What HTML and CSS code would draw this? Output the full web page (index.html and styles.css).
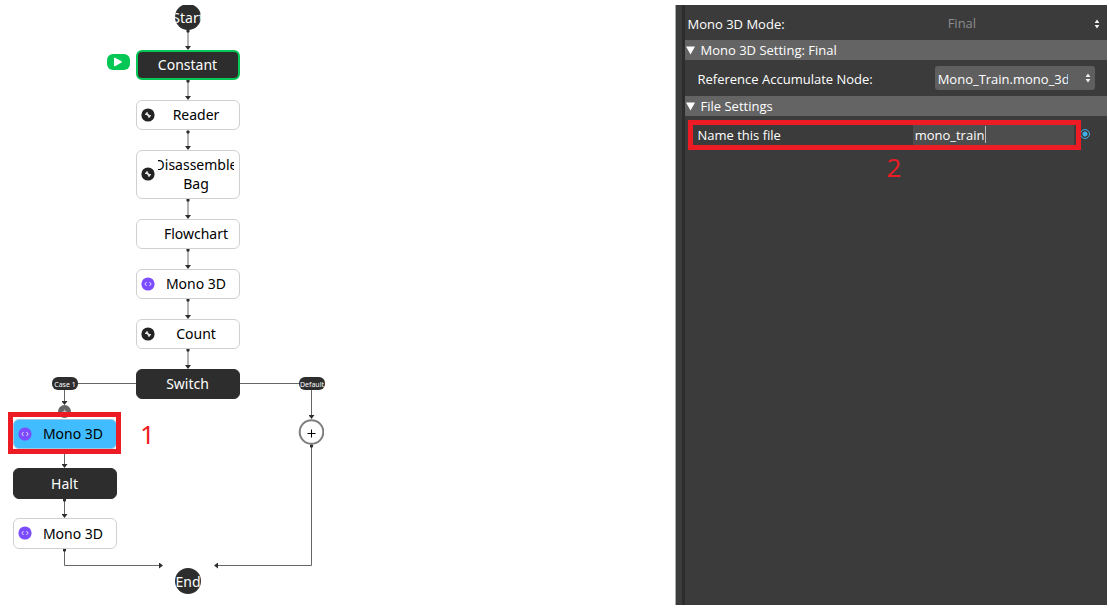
FILE: index.html
```html
<!DOCTYPE html>
<html lang="en">
<head>
<meta charset="utf-8">
<title>Mono 3D flowchart</title>
<link rel="stylesheet" href="styles.css">
</head>
<body>
<svg class="defs" aria-hidden="true">
  <symbol id="tool" viewBox="0 0 14 14"><circle cx="7" cy="7" r="6.6" fill="#232323"/><path d="M5 5l4 4" stroke="#eee" stroke-width="1.8" fill="none"/><path d="M4 6.500h2.300V4.200M7.700 9.800V7.500H10" stroke="#ddd" stroke-width="1.1" fill="none"/></symbol>
  <symbol id="code" viewBox="0 0 14 14"><circle cx="7" cy="7" r="6.6" fill="#7b4dff"/><path d="M5.6 5L3.8 7l1.8 2M8.4 5l1.800 2-1.800 2" stroke="#e4dbff" fill="none"/></symbol>
  <symbol id="updown" viewBox="0 0 6 10"><path d="M3 0.5L5.4 4H.6zM3 9.5L5.4 6H.6z" fill="#f2f2f2"/></symbol>
</svg>
<main class="canvas">
  <svg class="edges" aria-hidden="true">
    <defs>
      <marker id="tip" viewBox="0 0 6 4" refX="3" refY="3" markerWidth="6" markerHeight="4" markerUnits="userSpaceOnUse"><path d="M0 0h6L3 4z" fill="#2d2d2d"/></marker>
      <marker id="side" viewBox="0 0 4 6" refX="3" refY="3" markerWidth="4" markerHeight="6" markerUnits="userSpaceOnUse" orient="auto"><path d="M0 0v6L4 3z" fill="#2d2d2d"/></marker>
      <marker id="dot" viewBox="0 0 4 4" refX="2" refY="2" markerWidth="4" markerHeight="4" markerUnits="userSpaceOnUse"><circle cx="2" cy="2" r="1.7" fill="#2d2d2d"/></marker>
    </defs>
    <g class="both">
      <path d="M188 31V49"/><path d="M188 81V99"/><path d="M188 132V149"/><path d="M188 200V218"/><path d="M188 250V268"/><path d="M188 300V318"/><path d="M188 350V368"/><path d="M64.500 500V517"/>
    </g>
    <g class="end"><path d="M64.500 390V404"/><path d="M64.500 449V467"/><path d="M311.500 390V418"/></g>
    <g class="turn"><path d="M64.500 550V565.500H162"/><path d="M311.500 446V565.500H215"/></g>
    <path d="M77 383.500H136M240 383.500H299"/>
  </svg>
  <div class="terminal start"><span>Start</span></div>
  <button class="play" aria-label="Run"><svg viewBox="0 0 22 16"><path d="M7 4.500Q7 3.400 8 3.800L14.500 7.300Q15.300 8 14.500 8.600L8 12.200Q7 12.500 7 11.500z" fill="#fff"/></svg></button>
  <div class="node dark active main n1"><span class="label">Constant</span></div>
  <div class="node main n2"><svg class="icon"><use href="#tool"/></svg><span class="label">Reader</span></div>
  <div class="node tall main n3"><svg class="icon"><use href="#tool"/></svg><span class="label"><span>Disassemble</span><span>Bag</span></span></div>
  <div class="node main n4"><span class="icon"></span><span class="label">Flowchart</span></div>
  <div class="node main n5"><svg class="icon"><use href="#code"/></svg><span class="label">Mono 3D</span></div>
  <div class="node main n6"><svg class="icon"><use href="#tool"/></svg><span class="label">Count</span></div>
  <div class="node dark main n7"><span class="label">Switch</span></div>
  <div class="pill case">Case 1</div>
  <div class="pill default">Default</div>
  <div class="insert">+</div>
  <div class="node selected left m1"><svg class="icon"><use href="#code"/></svg><span class="label">Mono 3D</span></div>
  <div class="node dark left m2"><span class="label">Halt</span></div>
  <div class="node left m3"><svg class="icon"><use href="#code"/></svg><span class="label">Mono 3D</span></div>
  <button class="add" aria-label="Add node"><svg viewBox="0 0 26 26"><circle cx="13.500" cy="13" r="11.800" fill="#fff" stroke="#7d7d7d" stroke-width="2"/><path d="M9.500 14.500h8M13.500 10.500v8" stroke="#000" fill="none"/></svg></button>
  <div class="terminal finish"><span>End</span></div>
  <div class="mark mark-one"></div>
  <div class="number one">1</div>
</main>
<aside class="panel">
  <div class="row mode">
    <label for="mode">Mono 3D Mode:</label>
    <div class="pick plain"><select id="mode"><option>Final</option></select><svg><use href="#updown"/></svg></div>
  </div>
  <h2><svg viewBox="0 0 10 9"><path d="M0 0h10L5 9z" fill="#fff"/></svg>Mono 3D Setting: Final</h2>
  <div class="row">
    <label for="ref">Reference Accumulate Node:</label>
    <div class="pick boxed"><select id="ref"><option>Mono_Train.mono_3d</option></select><svg><use href="#updown"/></svg></div>
  </div>
  <h2><svg viewBox="0 0 10 9"><path d="M0 0h10L5 9z" fill="#fff"/></svg>File Settings</h2>
  <div class="row file">
    <label for="name">Name this file</label>
    <div class="entry"><div class="field"><input id="name" type="text" value="mono_train"><i class="caret"></i></div><input class="dot" type="radio" checked aria-label="Link file name"></div>
    <div class="mark mark-two"></div>
    <div class="number two">2</div>
  </div>
</aside>
</body>
</html>
```
FILE: styles.css
```css
* { box-sizing: border-box; }
body {
  margin: 0;
  min-height: 100vh;
  display: flex;
  background: #fff;
  font-family: "Noto Sans", "Open Sans", sans-serif;
}
button { padding: 0; border: 0; background: none; }
.defs { position: absolute; width: 0; height: 0; }

/* Flowchart */
.canvas { position: relative; flex: 1; min-width: 330px; min-height: 600px; font-size: 14px; }
.edges { position: absolute; inset: 0; width: 100%; height: 100%; fill: none; stroke: #666; }
.edges marker { stroke: none; }
.both path { marker-start: url(#dot); marker-end: url(#tip); }
.end path { marker-end: url(#tip); }
.turn path { marker-start: url(#dot); marker-end: url(#side); }
.node {
  position: absolute;
  width: 104px;
  height: 30px;
  display: flex;
  align-items: center;
  padding: 0 5px 1px 4px;
  border: 1px solid #d0d0d0;
  border-radius: 6px;
  background: #fff;
  color: #000;
  line-height: 19px;
}
.icon { flex: none; width: 14px; height: 14px; }
.label { flex: 1; min-width: 0; display: flex; flex-direction: column; align-items: center; margin-left: 3px; overflow: hidden; white-space: nowrap; }
.dark .label { margin-left: 0; }
.tall { height: 49px; }
.dark { background: #2d2d2d; border-color: #2d2d2d; color: #fff; }
.active { border: 2px solid #05c755; }
.selected { background: #40bcff; border-color: #9dc9e4; }
.main { left: 136px; }
.left { left: 13px; }
.n1 { top: 50px; }
.n2 { top: 100px; }
.n3 { top: 150px; }
.n4 { top: 219px; }
.n5 { top: 269px; }
.n6 { top: 319px; }
.n7 { top: 369px; }
.m1 { top: 419px; }
.m2 { top: 468px; height: 31px; }
.m3 { top: 518px; height: 31px; }
.terminal {
  position: absolute;
  left: 175px;
  width: 26px;
  height: 26px;
  display: flex;
  align-items: center;
  justify-content: center;
  overflow: hidden;
  border-radius: 50%;
  background: #2d2d2d;
  color: #fff;
  line-height: 28px;
}
.start { top: 4px; clip-path: inset(1px 0 0 0); }
.finish { top: 568px; }
.terminal span { padding-top: 2px; }
.play { position: absolute; left: 107px; top: 54px; width: 23px; height: 16px; border-radius: 6px; background: #05c755; }
.play svg { display: block; width: 22px; height: 16px; }
.pill {
  position: absolute;
  top: 377px;
  width: 26px;
  height: 13px;
  display: flex;
  justify-content: center;
  overflow: hidden;
  border-radius: 6px;
  background: #2d2d2d;
  color: #fff;
  font-size: 7px;
  line-height: 15px;
  white-space: nowrap;
}
.case { left: 52px; }
.default { left: 299px; }
.insert { position: absolute; left: 58px; top: 405px; width: 13px; height: 13px; border-radius: 50%; background: #666; color: #ddd; font-size: 9px; line-height: 13px; text-align: center; }
.add { position: absolute; left: 298px; top: 419px; width: 26px; height: 26px; }
.add svg { display: block; width: 26px; height: 26px; }

/* Annotations */
.mark { position: absolute; border: 5px solid #ed1c24; pointer-events: none; }
.mark-one { left: 8px; top: 412px; width: 113px; height: 42px; }
.mark-two { left: 3px; right: 26px; top: 4px; height: 30px; }
.number { position: absolute; color: #ed1c24; font-size: 26px; line-height: 32px; }
.one { left: 140px; top: 418px; }
.two { left: 202px; top: 35px; }

/* Settings panel */
.panel {
  flex: 0 0 39%;
  margin: 5px 2px 3px 0;
  border-left: 1px solid #aaa;
  background: linear-gradient(to right, #3b3d3d 6px, #2d2d2d 6px, #2d2d2d 9px, #3b3b3b 9px);
  padding-left: 9px;
  color: #fff;
  font-family: "Open Sans", "Noto Sans", sans-serif;
  font-size: 13px;
}
.row { position: relative; display: grid; grid-template-columns: 54% 1fr; align-items: center; height: 36px; padding-top: 2px; }
.row label { padding-left: 13px; white-space: nowrap; }
.row.mode { height: 35px; }
.mode label { padding-left: 3px; }
.panel h2 { display: flex; align-items: center; gap: 6px; margin: 0; padding-left: 1px; height: 20px; background: #646464; font-size: 13px; font-weight: 400; line-height: 22px; }
.panel h2 svg { width: 9px; height: 9px; }
.pick { position: relative; display: flex; }
.pick select { appearance: none; width: 100%; border: 0; border-radius: 3px; background: transparent; color: inherit; font: inherit; line-height: 18px; }
.pick svg { position: absolute; top: 50%; width: 6px; height: 10px; margin-top: -5px; pointer-events: none; }
.plain { color: #8c8c8c; }
.plain select { padding: 2px 20px 3px 35px; }
.plain svg { right: 7px; }
.boxed { margin: -2px 12px 0 22px; }
.boxed select { height: 24px; padding: 4px 27px 2px 3px; background: #5f5f5f; }
.boxed svg { right: 4px; }
.entry { display: flex; align-items: center; }
.field { position: relative; flex: 1; min-width: 0; }
.field input { display: block; width: 100%; height: 20px; padding: 0 2px; border: 0; outline: 0; background: #4d4d4d; color: #fff; font: inherit; }
.caret { position: absolute; left: 72px; top: 1px; width: 1px; height: 17px; background: #bbb; }
.dot { appearance: none; flex: none; width: 10px; height: 10px; margin: 0 17px 2px 6px; border: 1px solid #3daee9; border-radius: 50%; background: radial-gradient(circle, #3daee9 2px, transparent 3px); }
```
